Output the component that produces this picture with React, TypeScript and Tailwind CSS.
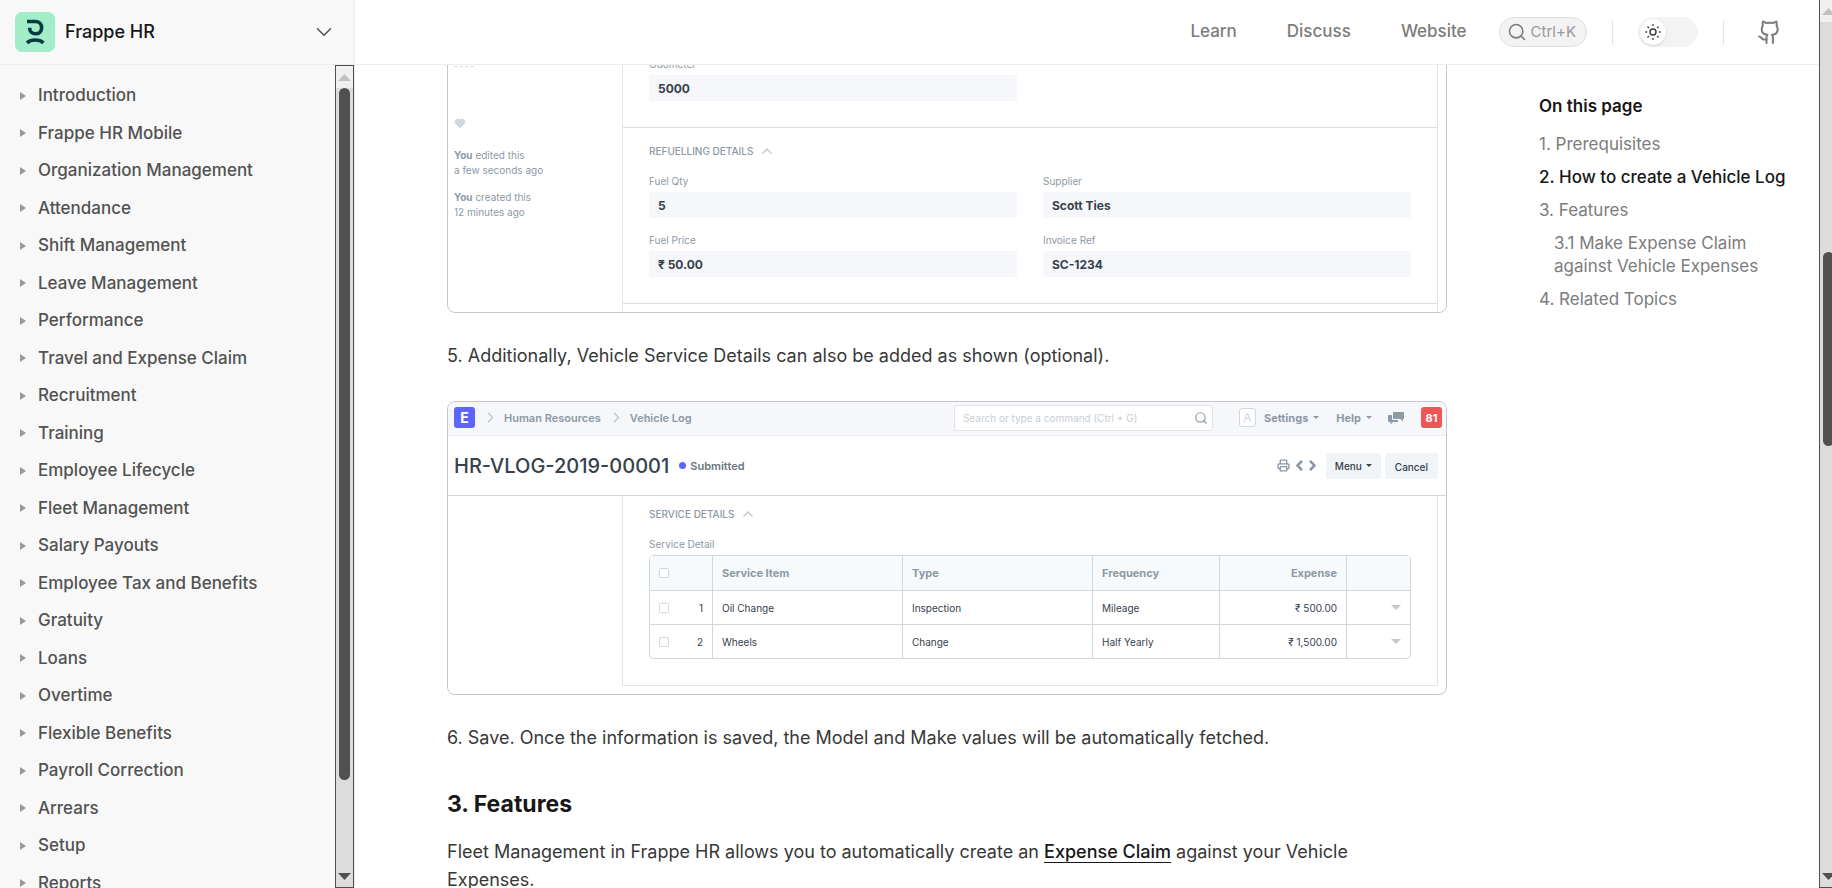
import { ChevronDown, ChevronUp, Heart, Printer, Search } from 'lucide-react'
import type { ReactNode } from 'react'

const NAV_ITEMS = [
  'Introduction',
  'Frappe HR Mobile',
  'Organization Management',
  'Attendance',
  'Shift Management',
  'Leave Management',
  'Performance',
  'Travel and Expense Claim',
  'Recruitment',
  'Training',
  'Employee Lifecycle',
  'Fleet Management',
  'Salary Payouts',
  'Employee Tax and Benefits',
  'Gratuity',
  'Loans',
  'Overtime',
  'Flexible Benefits',
  'Payroll Correction',
  'Arrears',
  'Setup',
  'Reports',
]

const SERVICES = [
  { item: 'Oil Change', type: 'Inspection', frequency: 'Mileage', expense: '₹ 500.00' },
  { item: 'Wheels', type: 'Change', frequency: 'Half Yearly', expense: '₹ 1,500.00' },
]

function Logo() {
  return (
    <svg viewBox="0 0 40 40" className="size-10" fill="none" stroke="#0b3a44" strokeWidth="3.6" aria-hidden="true">
      <rect width="40" height="40" rx="7" fill="#a1eec9" stroke="none" />
      <path d="M12 9.500h8.300c4 0 6.300 2.500 6.300 6.200s-2.500 6.100-6 6.100-6-2.300-6-6.100" />
      <path d="M12 30.800c4.200-3.700 12.200-3.700 16.400 0" />
    </svg>
  )
}

function GithubIcon() {
  return (
    <svg viewBox="0 0 22 24" className="h-6 w-[22px]" fill="none" stroke="#7c7c7c" strokeWidth="2" strokeLinecap="round" strokeLinejoin="round">
      <path d="M8.500 23v-5.500c0-1.300.3-2.200.9-2.800-3.400-.2-5.700-1.900-5.700-5.500 0-1.400.4-2.500 1.100-3.400-.3-1.400-.3-2.900.2-4.300L8.500 3.100c2.100-.4 4.300-.4 6.400 0l3.500-1.600c.5 1.400.5 2.900.2 4.300.7.900 1.100 2 1.100 3.400 0 3.600-2.300 5.300-5.700 5.500.6.600.9 1.500.9 2.800V23" />
      <path d="M1 16.500c2.500 0 2.500 3 5 3h2.500" />
    </svg>
  )
}

function SunIcon() {
  return (
    <svg viewBox="0 0 16 16" className="size-4" fill="none" stroke="#383838" strokeWidth="1.4" strokeLinecap="round">
      <circle cx="8" cy="8" r="3" />
      <path d="M8 .8v.8M8 14.400v.8M.8 8h.8M14.400 8h.8M2.900 2.900l.6.6M12.500 12.500l.6.6M2.900 13.100l.6-.6M12.500 3.500l.6-.6" />
    </svg>
  )
}

function CommentsIcon() {
  return (
    <svg viewBox="0 0 16 14" className="h-3.5 w-4" fill="#8d99a6">
      <path d="M6 1h9a1 1 0 0 1 1 1v5a1 1 0 0 1-1 1v2.500L12.500 8H6a1 1 0 0 1-1-1V2a1 1 0 0 1 1-1z" />
      <path d="M1 4h3v4a1 1 0 0 0 1 1h5v1a1 1 0 0 1-1 1H5l-2.500 2.500V11H1a1 1 0 0 1-1-1V5a1 1 0 0 1 1-1z" />
    </svg>
  )
}

function Caret({ className = 'fill-[#8d99a6]' }: { className?: string }) {
  return (
    <svg viewBox="0 0 6 3" className={`h-[3px] w-1.5 ${className}`}>
      <path d="M0 0h6L3 3z" />
    </svg>
  )
}

function Angle({ className = '', left = false, width = 2.6 }: { className?: string; left?: boolean; width?: number }) {
  return (
    <svg viewBox="0 0 7 11" className={`h-[11px] w-[7px] shrink-0 ${className}`} fill="none" stroke="currentColor" strokeWidth={width}>
      <path d={left ? 'M6 .8L1.500 5.500 6 10.200' : 'M1 .8l4.500 4.700L1 10.200'} />
    </svg>
  )
}

function Arrow({ down = false }: { down?: boolean }) {
  return (
    <svg viewBox="0 0 13 7" className={down ? 'h-[7px] w-[13px] rotate-180 fill-[#505050]' : 'h-[7px] w-[13px] fill-[#c1c1c1]'}>
      <path d="M0 7h13L6.500 0z" />
    </svg>
  )
}

function ScrollTrack({ children }: { children: ReactNode }) {
  return (
    <div className="flex h-full w-[17px] shrink-0 flex-col items-center bg-[#dcdcdc]" aria-hidden="true">
      <div className="flex h-[22px] w-full shrink-0 items-center justify-center bg-[#f0f0f0]">
        <Arrow />
      </div>
      <div className="flex min-h-0 w-full flex-1 flex-col items-center">{children}</div>
      <div className="flex h-[22px] shrink-0 items-center">
        <Arrow down />
      </div>
    </div>
  )
}

function Field({ label, value, id }: { label: string; value: string; id: string }) {
  return (
    <div className="flex flex-col gap-[3px]">
      <label htmlFor={id} className="text-[10px] leading-4 text-[#8d99a6]">
        {label}
      </label>
      <input
        id={id}
        readOnly
        value={value}
        className="h-[26px] w-full rounded-[3px] bg-[#f5f7fa] px-[9px] text-xs font-bold text-[#36414c] outline-none"
      />
    </div>
  )
}

function SectionTitle({ children }: { children: ReactNode }) {
  return (
    <h3 className="flex items-center gap-1.5 text-[10px] leading-4 font-medium text-[#8d99a6] uppercase">
      {children}
      <ChevronUp size={16} strokeWidth={2.5} color="#c8d0d6" />
    </h3>
  )
}

function Sidebar() {
  return (
    <aside className="flex w-[355px] shrink-0 flex-col border-r border-[#ededed] bg-[#f8f8f8]">
      <div className="flex h-[65px] shrink-0 items-center gap-2.5 border-b border-[#ededed] pr-[17px] pl-[15px]">
        <Logo />
        <span className="flex-1 text-lg font-medium text-[#171717]">Frappe HR</span>
        <button aria-label="Switch documentation">
          <ChevronDown size={26} strokeWidth={1.4} color="#525252" />
        </button>
      </div>
      <div className="flex min-h-0 flex-1">
        <nav className="flex-1 overflow-hidden pt-3">
          <ul>
            {NAV_ITEMS.map((item) => (
              <li key={item}>
                <button className="flex w-full items-center gap-3 py-1.5 pl-5 text-left text-[17px] leading-normal font-medium text-[#525252]">
                  <svg viewBox="0 0 6 8" className="h-2 w-1.5 fill-[#999999]">
                    <path d="M0 0l6 4-6 4z" />
                  </svg>
                  {item}
                </button>
              </li>
            ))}
          </ul>
        </nav>
        <div className="border border-[#4f4f4f]">
          <ScrollTrack>
            <div className="h-[89%] w-[11px] rounded-full bg-[#505050]" />
          </ScrollTrack>
        </div>
      </div>
    </aside>
  )
}

function Header() {
  return (
    <header className="flex h-[65px] shrink-0 items-center justify-end border-b border-[#ededed] pr-[39px]">
      <nav className="flex gap-[50px] pr-8 text-[17px] font-medium text-[#7c7c7c]">
        <a href="#learn">Learn</a>
        <a href="#discuss">Discuss</a>
        <a href="#website">Website</a>
      </nav>
      <button className="flex h-[30px] items-center gap-1 rounded-full border border-[#dfdfdf] bg-[#f3f3f3] pr-2.5 pl-[7px] text-[15px] text-[#999999]">
        <Search size={20} strokeWidth={1.9} color="#7c7c7c" />
        Ctrl+K
      </button>
      <span className="mx-[25px] h-[25px] w-px bg-[#e2e2e2]" />
      <button role="switch" aria-checked="false" aria-label="Dark mode" className="flex h-[30px] w-[60px] items-center rounded-full bg-[#f3f3f3] px-0.5">
        <span className="flex size-[26px] items-center justify-center rounded-full bg-white shadow-sm">
          <SunIcon />
        </span>
      </button>
      <span className="mx-[25px] h-[25px] w-px bg-[#e2e2e2]" />
      <a href="#github" aria-label="GitHub" className="pl-[9px]">
        <GithubIcon />
      </a>
    </header>
  )
}

function RefuellingForm() {
  return (
    <div className="flex overflow-hidden rounded-b-lg border border-[#c7c7c7] text-[10px] leading-[15px] text-[#8d99a6]">
      <div className="w-[174px] shrink-0 pl-1.5">
        <div className="h-[11px] w-5 border-b border-dashed border-[#d1d8dd]" />
        <Heart size={12} className="mt-[50px]" color="#d1d8dd" fill="#d1d8dd" />
        <p className="mt-[19px]">
          <b>You</b> edited this
          <br />a few seconds ago
        </p>
        <p className="mt-3">
          <b>You</b> created this
          <br />
          12 minutes ago
        </p>
      </div>
      <div className="mr-2 flex-1 border-x border-[#e2e6e9]">
        <div className="grid grid-cols-2 gap-[26px] border-b border-[#d9dfe3] px-[26px] pb-[26px]">
          <Field id="odometer" label="Odometer" value="5000" />
        </div>
        <div className="border-b border-[#d9dfe3] px-[26px] pt-[15px] pb-[26px]">
          <SectionTitle>Refuelling Details</SectionTitle>
          <div className="mt-3.5 grid grid-cols-2 gap-x-[26px] gap-y-3.5">
            <Field id="qty" label="Fuel Qty" value="5" />
            <Field id="supplier" label="Supplier" value="Scott Ties" />
            <Field id="price" label="Fuel Price" value="₹ 50.00" />
            <Field id="invoice" label="Invoice Ref" value="SC-1234" />
          </div>
        </div>
        <div className="h-2" />
      </div>
    </div>
  )
}

function ServiceTable() {
  const cell = 'border-l border-[#d1d8dd] px-[9px]'
  return (
    <table className="w-full table-fixed border-separate border-spacing-0 rounded border border-[#d1d8dd] text-[10px] text-[#36414c]">
      <colgroup>
        <col className="w-[62px]" />
        <col className="w-[25%]" />
        <col className="w-[25%]" />
        <col className="w-[127px]" />
        <col className="w-[127px]" />
        <col />
      </colgroup>
      <thead>
        <tr className="h-[34px] bg-[#f7fafc] text-left text-[11px] text-[#8d99a6]">
          <th className="px-[9px]">
            <input type="checkbox" aria-label="Select all" className="block size-2.5 appearance-none rounded-[2px] border border-[#d1d8dd] bg-white" />
          </th>
          <th className={cell}>Service Item</th>
          <th className={cell}>Type</th>
          <th className={cell}>Frequency</th>
          <th className={`${cell} text-right`}>Expense</th>
          <th className={cell} aria-label="Actions" />
        </tr>
      </thead>
      <tbody>
        {SERVICES.map((row, i) => (
          <tr key={row.item} className="h-[34px] [&>td]:border-t">
            <td className="border-[#d1d8dd] px-[9px]">
              <div className="flex items-center justify-between">
                <input type="checkbox" aria-label={`Select ${row.item}`} className="size-2.5 appearance-none rounded-[2px] border border-[#d1d8dd] bg-white" />
                {i + 1}
              </div>
            </td>
            <td className={cell}>{row.item}</td>
            <td className={cell}>{row.type}</td>
            <td className={cell}>{row.frequency}</td>
            <td className={`${cell} text-right`}>{row.expense}</td>
            <td className={cell}>
              <button aria-label={`Open ${row.item}`} className="ml-auto block">
                <svg viewBox="0 0 10 5" className="h-[5px] w-2.5 fill-[#c4c8cc]">
                  <path d="M0 0h10L5 5z" />
                </svg>
              </button>
            </td>
          </tr>
        ))}
      </tbody>
    </table>
  )
}

function VehicleLog() {
  return (
    <div className="overflow-hidden rounded-lg border border-[#c7c7c7] text-[11px] text-[#8d99a6]">
      <div className="flex h-[34px] items-center border-b border-[#ebeff2] bg-[#f5f7fa] pr-1 pb-0.5 pl-1.5 font-bold">
        <span className="flex size-[21px] items-center justify-center rounded-[3px] bg-[#5e64ff] text-sm text-white">E</span>
        <Angle width={1.5} className="mr-2.5 ml-3 text-[#c0c8d0]" />
        <a href="#hr" className="font-semibold">Human Resources</a>
        <Angle width={1.5} className="mr-2.5 ml-3 text-[#c0c8d0]" />
        <a href="#vlog" className="font-semibold">Vehicle Log</a>
        <div className="ml-auto flex h-[26px] w-[259px] items-center rounded-[3px] border border-[#dfe4e8] bg-white pr-1 pl-2">
          <input aria-label="Search" placeholder="Search or type a command (Ctrl + G)" className="min-w-0 flex-1 text-[10px] font-normal outline-none placeholder:text-[#c6ced4]" />
          <Search size={14} color="#8d99a6" />
        </div>
        <span className="mr-2 ml-[26px] flex h-[19px] w-[17px] items-center justify-center rounded-[3px] border border-[#d1d8dd] bg-white text-xs font-normal text-[#d1d8dd]">A</span>
        <button className="flex items-center gap-[5px]">
          Settings <Caret />
        </button>
        <button className="ml-[17px] flex items-center gap-[5px]">
          Help <Caret />
        </button>
        <button aria-label="Messages" className="mr-[17px] ml-4">
          <CommentsIcon />
        </button>
        <span className="flex size-[21px] items-center justify-center rounded-[3px] bg-[#f05656] text-white">81</span>
      </div>
      <div className="flex h-[60px] items-center border-b border-[#d1d8dd] pr-2 pl-1.5">
        <h2 className="text-xl font-medium text-[#36414c]">HR-VLOG-2019-00001</h2>
        <span className="ml-2.5 size-[7px] rounded-full bg-[#5e64ff]" />
        <span className="ml-1 font-semibold text-[#6c7680]">Submitted</span>
        <div className="ml-auto flex items-center">
          <Printer size={13} strokeWidth={2.5} />
          <button aria-label="Previous" className="ml-1.5">
            <Angle left />
          </button>
          <button aria-label="Next" className="ml-1.5">
            <Angle />
          </button>
          <button className="ml-2.5 flex h-[26px] items-center gap-1 rounded-[3px] bg-[#f0f4f7] px-[9px] text-[10px] font-medium text-[#36414c]">
            Menu <Caret className="fill-[#36414c]" />
          </button>
          <button className="ml-1 h-[26px] rounded-[3px] bg-[#f0f4f7] px-2.5 text-[10px] font-medium text-[#36414c]">Cancel</button>
        </div>
      </div>
      <div className="mr-2 mb-2 ml-[174px] border-x border-b border-[#dfe4e8] px-[26px] pt-2.5 pb-[26px]">
        <SectionTitle>Service Details</SectionTitle>
        <p className="mt-3.5 mb-[3px] text-[10px] leading-4">Service Detail</p>
        <ServiceTable />
      </div>
    </div>
  )
}

function TableOfContents() {
  return (
    <aside className="w-[280px] shrink-0 pt-[30px] text-[17px] leading-[23px] text-[#7c7c7c]">
      <h2 className="font-semibold text-[#171717]">On this page</h2>
      <ul className="mt-[15px] flex flex-col gap-2.5">
        <li><a href="#prerequisites">1. Prerequisites</a></li>
        <li><a href="#create" className="font-medium text-[#171717]">2. How to create a Vehicle Log</a></li>
        <li><a href="#features">3. Features</a></li>
        <li className="pl-[15px]">
          <a href="#claim">
            3.1 Make Expense Claim
            <br />
            against Vehicle Expenses
          </a>
        </li>
        <li><a href="#related">4. Related Topics</a></li>
      </ul>
    </aside>
  )
}

export default function App() {
  return (
    <div className="flex h-screen overflow-hidden bg-white font-[Inter,sans-serif]">
      <Sidebar />
      <div className="flex min-w-0 flex-1 flex-col">
        <Header />
        <div className="flex min-h-0 flex-1 gap-[92px] overflow-hidden pl-[92px]">
          <main className="-mt-2.5 min-w-0 flex-1 text-lg leading-7 text-[#383838]">
            <RefuellingForm />
            <p className="mt-[29px] mb-[31px]">5. Additionally, Vehicle Service Details can also be added as shown (optional).</p>
            <VehicleLog />
            <p className="mt-[29px]">6. Save. Once the information is saved, the Model and Make values will be automatically fetched.</p>
            <h2 id="features" className="mt-[38px] text-[23px] leading-7 font-bold text-[#171717]">3. Features</h2>
            <p className="mt-5 pr-12">
              Fleet Management in Frappe HR allows you to automatically create an{' '}
              <a href="#expense" className="font-medium text-[#171717] underline underline-offset-4">Expense Claim</a> against your Vehicle Expenses.
            </p>
          </main>
          <TableOfContents />
        </div>
      </div>
      <div className="w-[13px] shrink-0 overflow-hidden border-b border-l border-[#4f4f4f]">
        <ScrollTrack>
          <div className="mt-[230px] h-[23%] w-[11px] rounded-full bg-[#505050]" />
        </ScrollTrack>
      </div>
    </div>
  )
}
